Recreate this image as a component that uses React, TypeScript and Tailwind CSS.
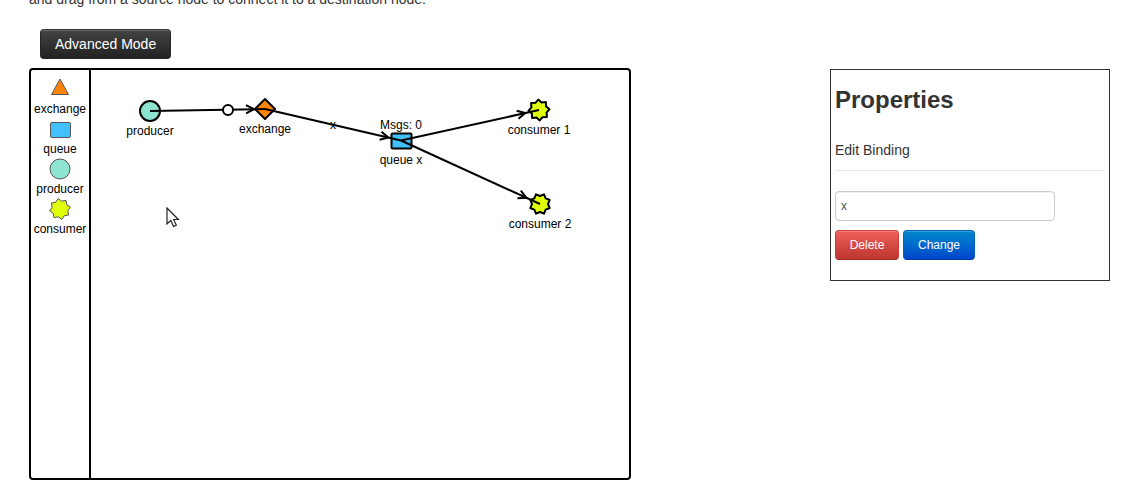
import React, { useState } from "react";

type Point = { x: number; y: number };

const gearPoints = (cx: number, cy: number, rotation: number) =>
  Array.from({ length: 16 }, (_, i) => {
    const angle = ((i * 22.5 + rotation) * Math.PI) / 180;
    const r = i % 2 === 0 ? 10.5 : 8;
    return `${(cx + r * Math.cos(angle)).toFixed(2)},${(cy + r * Math.sin(angle)).toFixed(2)}`;
  }).join(" ");

const palette = [
  { name: "exchange", shape: <polygon points="12,4 20.5,19.5 3.5,19.5" fill="#ff8408" /> },
  { name: "queue", shape: <rect x="2.5" y="7.5" width="20" height="15" rx="1.5" fill="#42c0fb" /> },
  { name: "producer", shape: <circle cx="12" cy="14" r="10" fill="#8ee5cf" /> },
  { name: "consumer", shape: <polygon points={gearPoints(12, 14, -10)} fill="#e0ff0a" /> },
];

function Edge({ from, to, inset }: { from: Point; to: Point; inset: number }) {
  const angle = Math.atan2(to.y - from.y, to.x - from.x);
  const tip = { x: to.x - inset * Math.cos(angle), y: to.y - inset * Math.sin(angle) };
  const wing = (side: number) =>
    `${tip.x - 9 * Math.cos(angle + side * 0.48)},${tip.y - 9 * Math.sin(angle + side * 0.48)}`;
  return (
    <g fill="none" stroke="#000" strokeWidth="2">
      <line x1={from.x} y1={from.y} x2={to.x} y2={to.y} />
      <polyline points={`${wing(1)} ${tip.x},${tip.y} ${wing(-1)}`} />
    </g>
  );
}

const producer = { x: 59, y: 41 };
const exchange = { x: 174, y: 39 };
const queue = { x: 310, y: 70.5 };
const consumer1 = { x: 448, y: 40 };
const consumer2 = { x: 449, y: 134 };

function Diagram() {
  return (
    <svg
      className="h-[408px] min-w-0 flex-1 font-['Liberation_Sans',Arial,sans-serif] text-xs"
      role="img"
      aria-label="Message flow"
    >
      <g stroke="#000" strokeWidth="2" strokeLinejoin="round">
        <circle cx={producer.x} cy={producer.y} r="10" fill="#8ee5cf" />
        <polygon points="174,29 184,39 174,49 164,39" fill="#ff8408" />
        <rect x="300.5" y="63.5" width="20" height="15" rx="1" fill="#42c0fb" />
        <polygon points={gearPoints(consumer1.x, consumer1.y, -4)} fill="#e0ff0a" />
        <polygon points={gearPoints(consumer2.x, consumer2.y, 22.5)} fill="#e0ff0a" />
      </g>
      <Edge from={producer} to={exchange} inset={11} />
      <Edge from={exchange} to={queue} inset={13} />
      <Edge from={queue} to={consumer1} inset={14} />
      <Edge from={queue} to={consumer2} inset={15} />
      <circle cx="137" cy="40" r="5" fill="#fff" stroke="#000" strokeWidth="2" />
      <g fill="#000" textAnchor="middle">
        <text x="59" y="65">producer</text>
        <text x="174" y="63">exchange</text>
        <text x="242" y="59">x</text>
        <text x="310" y="59">Msgs: 0</text>
        <text x="310" y="94">queue x</text>
        <text x="448" y="64">consumer 1</text>
        <text x="449" y="158">consumer 2</text>
      </g>
      <path
        d="M76 138v16l3.8-3.5 2.7 6 2.8-1.3-2.7-5.7h4.8z"
        fill="#fff"
        stroke="#222"
        strokeWidth="1.2"
      />
    </svg>
  );
}

export default function App() {
  const [binding, setBinding] = useState("x");
  return (
    <div className="overflow-hidden bg-white px-[29px] font-['Liberation_Sans',Arial,sans-serif] text-sm leading-5 text-[#333]">
      <p className="-mt-[11px]">and drag from a source node to connect it to a destination node.</p>
      <button className="mt-5 ml-[11px] block h-[30px] rounded border border-[#252525] border-t-[#363636] bg-linear-to-b from-[#444] to-[#222] px-[14px] text-white shadow-[inset_0_1px_0_rgba(255,255,255,0.2)]">
        Advanced Mode
      </button>
      <main className="mt-[9px] flex items-start justify-between gap-6">
        <section className="flex max-w-[602px] min-w-0 flex-1 rounded border-2 border-black">
          <ul className="w-[60px] shrink-0 border-r-2 border-black pt-[5px]">
            {palette.map(({ name, shape }) => (
              <li key={name} className="flex h-10 flex-col items-center text-xs leading-4 text-black">
                <svg className="size-[26px] shrink-0" viewBox="-1 0 26 26" stroke="#555" strokeWidth="1" strokeLinejoin="round" aria-hidden="true">
                  {shape}
                </svg>
                <span>{name}</span>
              </li>
            ))}
          </ul>
          <Diagram />
        </section>
        <aside className="mt-px w-[280px] shrink-0 border border-[#333] p-1 pb-5">
          <h2 className="mt-1.5 text-2xl leading-10 font-bold">Properties</h2>
          <form onSubmit={(e) => e.preventDefault()}>
            <label htmlFor="binding" className="mt-5 block border-b border-[#e5e5e5] pb-[10px]">
              Edit Binding
            </label>
            <input
              id="binding"
              value={binding}
              onChange={(e) => setBinding(e.target.value)}
              className="mt-5 block h-[30px] w-[220px] rounded border border-[#ccc] px-[5px] text-xs text-[#555] shadow-[inset_0_1px_1px_rgba(0,0,0,0.075)]"
            />
            <div className="mt-[9px] flex gap-1 text-xs text-white">
              <button type="button" className="h-[30px] w-16 rounded border border-[#c9403a] border-b-[#a52a25] bg-linear-to-b from-[#ee5f5b] to-[#bd362f] shadow-[inset_0_1px_0_rgba(255,255,255,0.2)]">
                Delete
              </button>
              <button type="submit" className="h-[30px] w-[72px] rounded border border-[#0062bd] border-b-[#003ba5] bg-linear-to-b from-[#0088cc] to-[#0044cc] shadow-[inset_0_1px_0_rgba(255,255,255,0.2)]">
                Change
              </button>
            </div>
          </form>
        </aside>
      </main>
    </div>
  );
}
